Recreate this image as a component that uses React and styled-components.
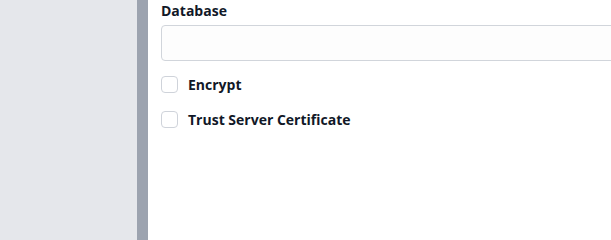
import React from "react";
import styled, { createGlobalStyle } from "styled-components";

const GlobalStyle = createGlobalStyle`
  html, body {
    margin: 0;
    padding: 0;
    background: #ffffff;
  }
  body {
    font-family: "Open Sans", "Noto Sans", sans-serif;
  }
`;

const Layout = styled.div`
  display: flex;
  height: 100vh;
  min-height: 207px;
  overflow: hidden;
`;

const Sidebar = styled.aside`
  width: 137px;
  flex-shrink: 0;
  background: #e5e7eb;
`;

const Divider = styled.div`
  width: 11px;
  flex-shrink: 0;
  background: #9ca3af;
`;

const Content = styled.main`
  flex: 1;
  min-width: 0;
  padding: 1px 0 0 13px;
  overflow: hidden;
`;

const Form = styled.div`
  width: 560px;
  display: flex;
  flex-direction: column;
`;

const Label = styled.label`
  font-size: 14px;
  font-weight: 700;
  line-height: 20px;
  color: #111827;
  margin-bottom: 4px;
`;

const Input = styled.input`
  box-sizing: border-box;
  height: 36px;
  width: 100%;
  border: 1px solid #d1d5db;
  border-radius: 4px;
  background: #fdfdfd;
  padding: 0 10px;
  font-size: 14px;
  outline: none;
`;

const CheckRow = styled.label`
  display: flex;
  align-items: center;
  gap: 10px;
  height: 20px;
  margin-top: ${(p) => p.$top}px;
  font-size: 14px;
  font-weight: 700;
  color: #111827;
  cursor: pointer;
`;

const Box = styled.input.attrs({ type: "checkbox" })`
  appearance: none;
  margin: 0;
  width: 17px;
  height: 17px;
  border: 1px solid #cfd3da;
  border-radius: 4px;
  background: #ffffff;
  flex-shrink: 0;
`;

export default function App() {
  return (
    <>
      <GlobalStyle />
      <Layout>
        <Sidebar />
        <Divider />
        <Content>
          <Form>
            <Label>Database</Label>
            <Input type="text" />
            <CheckRow $top={13}>
              <Box />
              Encrypt
            </CheckRow>
            <CheckRow $top={15}>
              <Box />
              Trust Server Certificate
            </CheckRow>
          </Form>
        </Content>
      </Layout>
    </>
  );
}
